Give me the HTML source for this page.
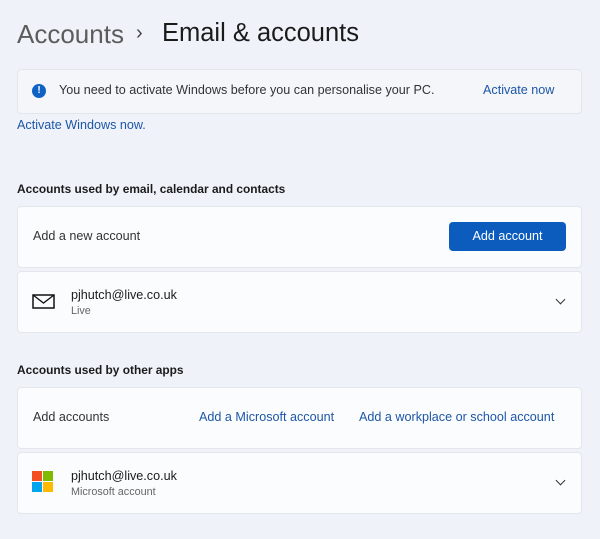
<!DOCTYPE html>
<html><head><style>
body{margin:0;width:600px;height:539px;background:#eff3f9;font-family:"Liberation Sans",sans-serif;position:relative;overflow:hidden;color:#1b1b1b}
.a{position:absolute;white-space:nowrap}
.card{position:absolute;left:17px;width:563px;background:#fbfcfd;border:1px solid #e3e6ea;border-radius:4px}
.lnk{color:#1d56a8;font-size:12.6px}
.t13{font-size:12.6px}
.sub{font-size:10.8px;color:#666}
.chev{position:absolute;right:17px;width:6px;height:6px;border-right:1.3px solid #333;border-bottom:1.3px solid #333;transform:rotate(45deg)}
</style></head><body>
<div class="a" style="left:17px;top:19px;font-size:26px;color:#5c5c5c">Accounts</div>
<div class="a" style="left:136px;top:22px;font-size:20px;color:#444">›</div>
<div class="a" style="left:162px;top:19px;font-size:25.5px;color:#1b1b1b">Email &amp; accounts</div>

<div class="card" style="top:69px;height:43px;background:#f4f6f9"></div>
<div class="a" style="left:32px;top:84px;width:14px;height:14px;border-radius:50%;background:#0f62c4;color:#fff;font-size:10px;font-weight:bold;text-align:center;line-height:14px">!</div>
<div class="a t13" style="left:59px;top:83px;color:#333">You need to activate Windows before you can personalise your PC.</div>
<div class="a lnk" style="left:483px;top:83px">Activate now</div>
<div class="a lnk" style="left:17px;top:118px">Activate Windows now.</div>

<div class="a" style="left:17px;top:182px;font-weight:bold;font-size:11.9px">Accounts used by email, calendar and contacts</div>
<div class="card" style="top:206px;height:60px"></div>
<div class="a t13" style="left:33px;top:229px;color:#333">Add a new account</div>
<div class="a" style="left:449px;top:222px;width:117px;height:29px;background:#0b5cbd;border-radius:4px;color:#fff;font-size:12.6px;text-align:center;line-height:29px">Add account</div>

<div class="card" style="top:271px;height:60px"><div class="chev" style="top:24px"></div></div>
<svg class="a" style="left:32px;top:294px" width="23" height="16"><rect x="1" y="1" width="21" height="13" fill="none" stroke="#111" stroke-width="1.5"/><path d="M1 1 L11.5 9 L22 1" fill="none" stroke="#111" stroke-width="1.3"/></svg>
<div class="a t13" style="left:71px;top:288px">pjhutch@live.co.uk</div>
<div class="a sub" style="left:71px;top:305px">Live</div>

<div class="a" style="left:17px;top:363px;font-weight:bold;font-size:11.9px">Accounts used by other apps</div>
<div class="card" style="top:387px;height:60px"></div>
<div class="a t13" style="left:33px;top:410px;color:#333">Add accounts</div>
<div class="a lnk" style="left:199px;top:410px">Add a Microsoft account</div>
<div class="a lnk" style="left:359px;top:410px">Add a workplace or school account</div>

<div class="card" style="top:452px;height:60px"><div class="chev" style="top:24px"></div></div>
<svg class="a" style="left:32px;top:471px" width="22" height="22"><rect x="0" y="0" width="10" height="10" fill="#f25022"/><rect x="11" y="0" width="10" height="10" fill="#7fba00"/><rect x="0" y="11" width="10" height="10" fill="#00a4ef"/><rect x="11" y="11" width="10" height="10" fill="#ffb900"/></svg>
<div class="a t13" style="left:71px;top:469px">pjhutch@live.co.uk</div>
<div class="a sub" style="left:71px;top:486px">Microsoft account</div>
</body></html>
